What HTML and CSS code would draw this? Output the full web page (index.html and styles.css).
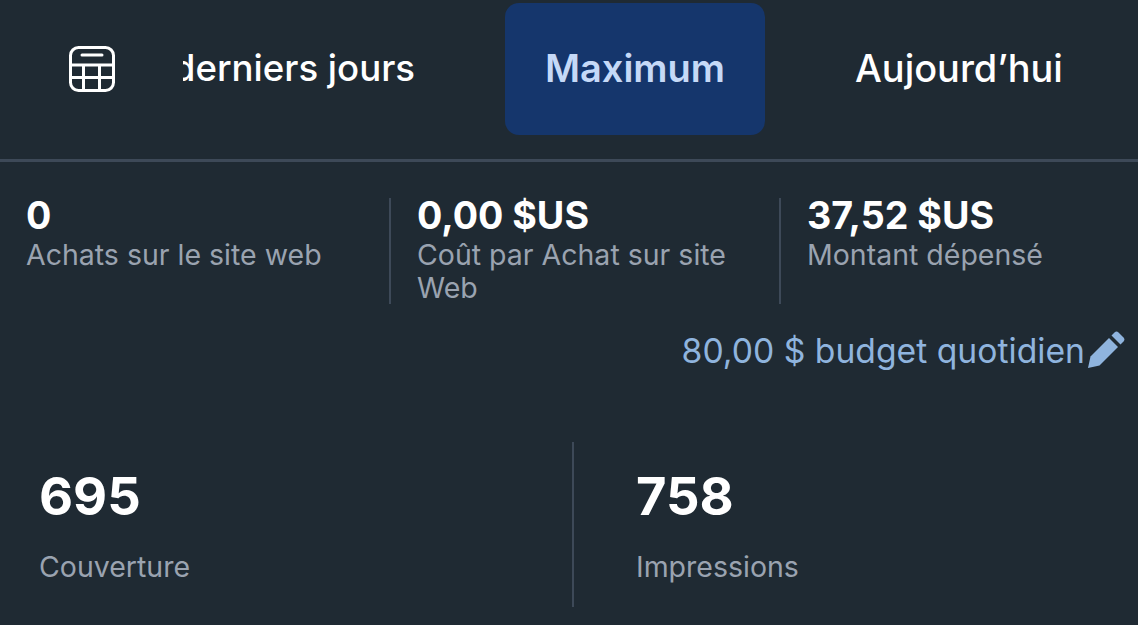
FILE: index.html
```html
<!DOCTYPE html>
<html lang="fr">
<head>
  <meta charset="UTF-8" />
  <meta name="viewport" content="width=device-width, initial-scale=1.0">
  <title>Statistiques de la publicité</title>
  <link rel="stylesheet" href="styles.css">
</head>
<body>
  <div class="tabs">
    <div class="calendar">
      <svg width="46" height="46" viewBox="0 0 46 46" fill="none" stroke="#fff" stroke-width="3">
        <rect x="1.500" y="1.500" width="43" height="43" rx="8" />
        <path d="M13 9h20" stroke-linecap="round" />
        <path d="M1.500 19h43M1.500 31.500h43M14.500 19v25.500M30.500 19v25.500" />
      </svg>
    </div>
    <div class="tab-clip"><span>7 derniers jours</span></div>
    <div class="tab active">Maximum</div>
    <div class="tab last">Aujourd’hui</div>
  </div>

  <div class="stats">
    <div class="stat">
      <div class="stat-value">0</div>
      <div class="stat-label">Achats sur le site web</div>
    </div>
    <div class="stat">
      <div class="stat-value">0,00 $US</div>
      <div class="stat-label">Coût par Achat sur site Web</div>
    </div>
    <div class="stat">
      <div class="stat-value">37,52 $US</div>
      <div class="stat-label">Montant dépensé</div>
    </div>
  </div>

  <div class="budget">
    <span>80,00 $ budget quotidien</span>
    <svg width="38" height="38" viewBox="0 0 38 38" fill="#8fb4de">
      <path d="M1 37l2.500-11.500L22 7l9 9-18.500 18.500z" />
      <path d="M24.500 4.500l3-3a3 3 0 0 1 4 0l5 5a3 3 0 0 1 0 4l-3 3z" />
    </svg>
  </div>

  <div class="reach">
    <div class="reach-col">
      <div class="reach-value">695</div>
      <div class="reach-label">Couverture</div>
    </div>
    <div class="reach-col">
      <div class="reach-value">758</div>
      <div class="reach-label">Impressions</div>
    </div>
  </div>
</body>
</html>
```

FILE: styles.css
```css
html, body {
  margin: 0;
  padding: 0;
  height: 100%;
  overflow: hidden;
}
body {
  background: #1f2a33;
  color: #fff;
  font-family: Inter, "Noto Sans", sans-serif;
}
.tabs {
  display: flex;
  align-items: center;
  height: 132px;
  padding: 3px 0 24px 0;
  border-bottom: 3px solid #3d4958;
}
.calendar {
  display: flex;
  width: 183px;
  padding-left: 69px;
  box-sizing: border-box;
}
.tab-clip {
  width: 232px;
  padding-bottom: 3px;
  overflow: hidden;
  display: flex;
  justify-content: flex-end;
  font-size: 36.600px;
  font-weight: 500;
  white-space: nowrap;
}
.tab {
  display: flex;
  align-items: center;
  justify-content: center;
  padding-bottom: 3px;
  font-size: 37.900px;
  font-weight: 500;
}
.tab.active {
  width: 260px;
  height: 132px;
  box-sizing: border-box;
  margin-left: 90px;
  background: #15366c;
  border-radius: 14px;
  color: #c5d9f7;
  font-size: 38px;
  font-weight: 600;
}
.tab.last {
  margin-left: 90px;
}
.stats {
  display: grid;
  grid-template-columns: 391px 390px 1fr;
  margin-top: 36px;
}
.stat {
  height: 106px;
  padding: 0 26px;
  box-sizing: border-box;
  border-right: 2px solid #3d4958;
}
.stat:last-child {
  border-right: none;
}
.stat-value {
  font-size: 37.600px;
  font-weight: 700;
  line-height: 36px;
}
.stat-label {
  margin-top: 4px;
  font-size: 28.500px;
  line-height: 33px;
  color: #9aa3b0;
}
.budget {
  display: flex;
  justify-content: flex-end;
  align-items: center;
  gap: 2px;
  margin-top: 26px;
  padding-right: 13px;
  font-size: 33.700px;
  line-height: 38px;
  color: #8fb4de;
}
.budget span {
  padding-top: 2px;
}
.reach {
  display: grid;
  grid-template-columns: 574px 1fr;
  margin-top: 72px;
}
.reach-col {
  height: 165px;
  padding: 26px 0 0 39px;
  box-sizing: border-box;
}
.reach-col:first-child {
  border-right: 2px solid #3d4958;
}
.reach-col:last-child {
  padding-left: 62px;
}
.reach-value {
  font-size: 52.500px;
  font-weight: 700;
  line-height: 56px;
}
.reach-label {
  margin-top: 26px;
  font-size: 28.500px;
  line-height: 34px;
  color: #9aa3b0;
}
```
